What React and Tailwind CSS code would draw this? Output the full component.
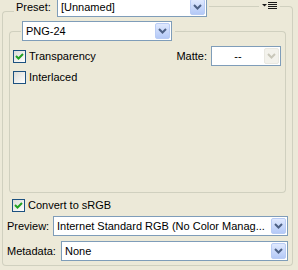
import React from 'react'

const LINE = 'border-[#D0D0BF]'

function Chevron({ disabled }) {
  return (
    <svg width="9" height="6" viewBox="0 0 9 6" className="block">
      <path d="M1 1 L4.5 4.5 L8 1" fill="none" stroke={disabled ? '#C9C7BA' : '#4D6185'} strokeWidth="2" />
    </svg>
  )
}

function Select({ value, className = '', disabled, center }) {
  return (
    <div className={`flex h-[20px] items-stretch border border-[#7F9DB9] bg-white ${className}`}>
      <div className={`flex flex-1 items-center overflow-hidden whitespace-nowrap px-[3px] ${center ? 'justify-center' : ''}`}>
        {value}
      </div>
      <div
        className={`my-px mr-px flex w-[15px] items-center justify-center rounded-[2px] border ${
          disabled ? 'border-[#E9E8E1] bg-[#F3F2EC]' : 'border-[#B9CCF5] bg-linear-to-b from-[#E0E9FE] to-[#B4C9F7]'
        }`}
      >
        <Chevron disabled={disabled} />
      </div>
    </div>
  )
}

function Check({ checked }) {
  return (
    <span className="flex h-[13px] w-[13px] shrink-0 items-center justify-center border border-[#1C5180] bg-linear-to-br from-[#DCDCD7] to-white">
      {checked && (
        <svg width="11" height="11" viewBox="0 0 11 11" className="block">
          <path d="M2 5 L4.5 7.5 L9 3" fill="none" stroke="#21A121" strokeWidth="2" />
        </svg>
      )}
    </span>
  )
}

function MenuIcon() {
  return (
    <svg width="15" height="8" viewBox="0 0 15 8" className="block">
      <path d="M0 2 H5 L2.5 4.5 Z" fill="#1a1a1a" />
      <rect x="6" y="0" width="9" height="1" fill="#1a1a1a" />
      <rect x="6" y="2" width="9" height="1" fill="#1a1a1a" />
      <rect x="6" y="4" width="9" height="1" fill="#1a1a1a" />
      <rect x="6" y="6" width="9" height="1" fill="#1a1a1a" />
    </svg>
  )
}

export default function App() {
  return (
    <div className="h-[270px] w-[298px] overflow-hidden bg-[#ECE9D8] font-['Liberation_Sans',Arial,sans-serif] text-[11px] leading-[13px] text-black">
      {/* Preset header */}
      <div className="flex h-[21px] pr-[5px]">
        <div className={`ml-[2px] mt-[11px] w-[12px] rounded-tl-[4px] border-l border-t ${LINE}`} />
        <span className="ml-[2px] mt-[1px] w-[41px]">Preset:</span>
        <Select value="[Unnamed]" className="-mt-[3px] w-[150px]" />
        <div className="flex flex-1 items-start">
          <div className={`ml-[2px] mt-[6px] w-[50px] border-t ${LINE}`} />
          <div className="ml-[3px] mt-[2px]">
            <MenuIcon />
          </div>
          <div className={`ml-[3px] mt-[6px] flex-1 self-stretch rounded-tr-[4px] border-r border-t ${LINE}`} />
        </div>
      </div>

      {/* Outer group */}
      <div className={`ml-[2px] mr-[5px] flex h-[245px] flex-col rounded-b-[4px] border-x border-b ${LINE}`}>
        {/* Format group */}
        <div className="mx-[6px] flex flex-col">
          <div className="flex h-[20px]">
            <div className={`mt-[10px] w-[12px] rounded-tl-[4px] border-l border-t ${LINE}`} />
            <Select value="PNG-24" className="ml-px w-[150px]" />
            <div className={`ml-[3px] mt-[10px] flex-1 rounded-tr-[4px] border-r border-t ${LINE}`} />
          </div>
          <div className={`flex h-[152px] flex-col rounded-b-[4px] border-x border-b pl-[3px] pr-[4px] ${LINE}`}>
            <div className="mt-[5px] flex h-[20px] items-center">
              <Check checked />
              <span className="ml-[3px]">Transparency</span>
              <span className="ml-auto">Matte:</span>
              <Select value="--" center disabled className="ml-[4px] w-[70px]" />
            </div>
            <div className="mt-[5px] flex h-[13px] items-center">
              <Check />
              <span className="ml-[3px]">Interlaced</span>
            </div>
          </div>
        </div>

        <div className="ml-[9px] mt-[6px] flex h-[13px] items-center">
          <Check checked />
          <span className="ml-[3px]">Convert to sRGB</span>
        </div>

        <div className="mx-[4px] mt-[4px] flex h-[20px] items-center">
          <span className="w-[46px] shrink-0">Preview:</span>
          <Select value="Internet Standard RGB (No Color Manag..." className="flex-1" />
        </div>

        <div className="mx-[4px] mt-[5px] flex h-[20px] items-center">
          <span className="w-[54px] shrink-0">Metadata:</span>
          <Select value="None" className="flex-1" />
        </div>
      </div>
    </div>
  )
}
